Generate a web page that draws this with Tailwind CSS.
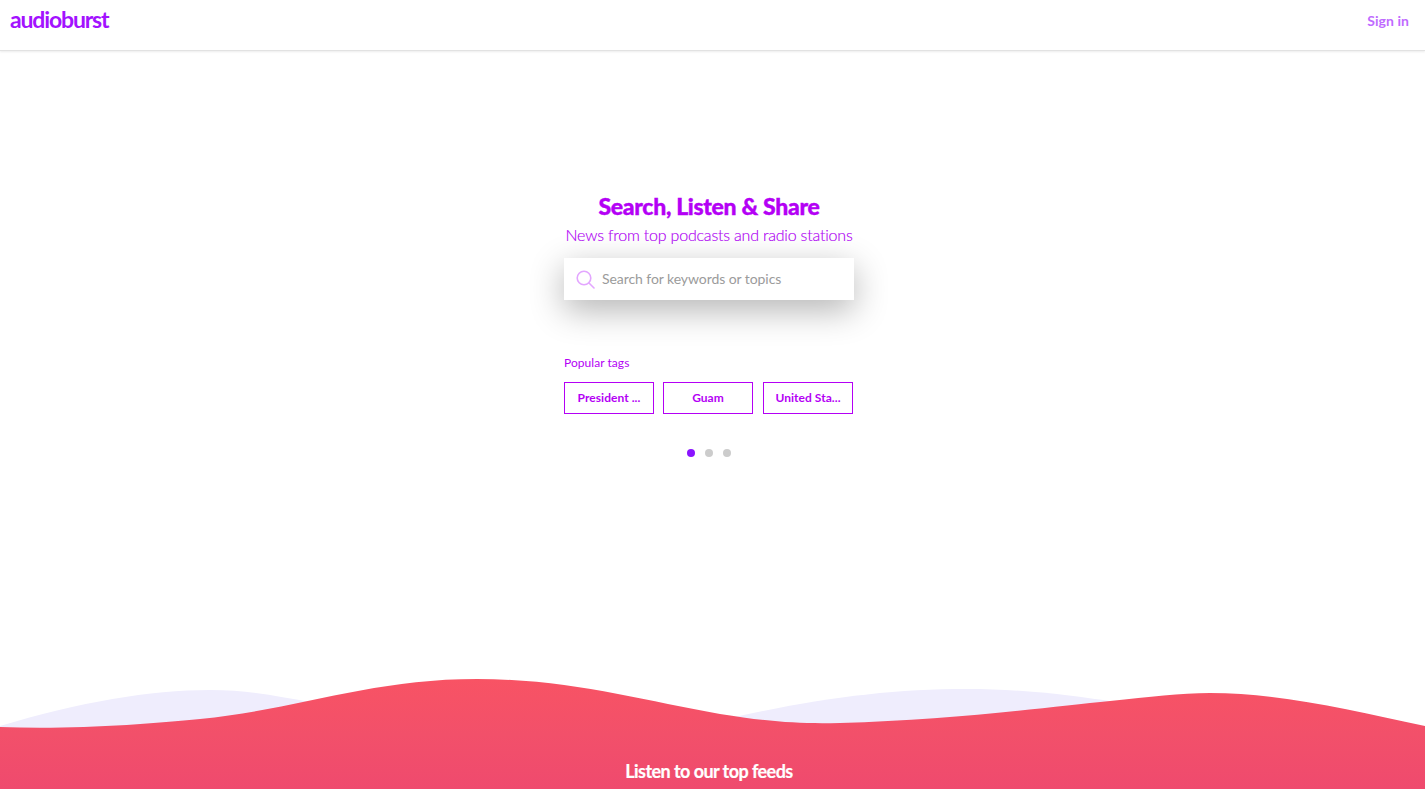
<!DOCTYPE html>
<html lang="en">
<head>
    <meta charset="UTF-8">
    <title>Audioburst</title>
    <script src="https://cdn.jsdelivr.net/npm/@tailwindcss/browser@4"></script>
</head>
<body class="bg-white font-['Lato',sans-serif]">
    <div class="flex flex-col h-[789px] overflow-hidden">
        <header class="h-[51px] shrink-0 flex items-start justify-between pl-[10px] pr-[16px] border-b border-[#e2e2e2] shadow-[0_1px_2px_rgba(0,0,0,0.08)]">
            <a class="mt-[5px] text-[23px] leading-[28px] font-bold text-[#a312ff] tracking-[-1.15px]">audioburst</a>
            <a class="mt-[11px] text-[14px] leading-[20px] font-bold tracking-[0.05px] text-[#bf6bff]">Sign in</a>
        </header>

        <main class="flex-1 flex flex-col items-center pt-[140px] pr-[7px]">
            <h1 class="text-[23px] leading-[30px] font-black tracking-[-0.32px] [-webkit-text-stroke:0.4px_#b400f5] text-[#b400f5]">Search, Listen &amp; Share</h1>
            <p class="mt-[2px] text-[16px] leading-[24px] font-light tracking-[-0.2px] [-webkit-text-stroke:0.15px_#b000f5] text-[#b000f5]">News from top podcasts and radio stations</p>

            <div class="mt-[11px] w-[290px] h-[42px] flex items-center gap-[7px] pl-[12px] bg-white shadow-[0_10px_34px_rgba(0,0,0,0.3)]">
                <svg class="w-[19px] h-[19px]" viewBox="0 0 19 19" fill="none" stroke="#e3a6ff" stroke-width="1.6" stroke-linecap="round">
                    <circle cx="8" cy="8" r="6.8" />
                    <path d="M13 13l5 5" />
                </svg>
                <span class="pb-[2px] text-[14px] tracking-[-0.07px] text-[#9b9b9b]">Search for keywords or topics</span>
            </div>

            <div class="mt-[55px] w-[290px]">
                <div class="text-[12px] leading-[16px] tracking-[0.05px] text-[#b400f5]">Popular tags</div>
                <div class="mt-[11px] flex gap-[9px]">
                    <button class="w-[90px] h-[32px] border border-[#b400f5] text-[12px] font-bold tracking-[0.05px] text-[#b400f5]">President ...</button>
                    <button class="w-[90px] h-[32px] border border-[#b400f5] text-[12px] font-bold tracking-[0.05px] text-[#b400f5]">Guam</button>
                    <button class="ml-[1px] w-[90px] h-[32px] border border-[#b400f5] text-[12px] font-bold tracking-[0.05px] text-[#b400f5]">United Sta...</button>
                </div>
            </div>

            <div class="mt-[35px] flex gap-[10px]">
                <span class="w-[8px] h-[8px] rounded-full bg-[#8a14ff]"></span>
                <span class="w-[8px] h-[8px] rounded-full bg-[#cccccc]"></span>
                <span class="w-[8px] h-[8px] rounded-full bg-[#cccccc]"></span>
            </div>
        </main>

        <footer class="relative h-[119px] shrink-0">
            <svg class="absolute inset-0 w-full h-full" viewBox="0 670 1425 119" preserveAspectRatio="none">
                <defs>
                    <linearGradient id="wave-red" x1="0" y1="0" x2="0" y2="1">
                        <stop offset="0" stop-color="#f85364" />
                        <stop offset="0.5" stop-color="#f2506a" />
                        <stop offset="1" stop-color="#ef4a6e" />
                    </linearGradient>
                </defs>
                <path fill="#efedfd" d="M0 726C80 702 150 690 210 690C250 690 280 697 310 702L310 730L0 730Z" />
                <path fill="#efedfd" d="M730 718C820 698 890 689 967 689C1020 689 1070 695 1115 702L1115 730L730 730Z" />
                <path fill="url(#wave-red)" d="M0 727C70 730 150 724 200 719C300 709 370 679 477 679C570 679 640 700 720 714C770 722 800 724 840 723C950 720 1050 707 1110 701C1150 697 1180 693 1210 693C1280 693 1350 710 1425 726L1425 789L0 789Z" />
            </svg>
            <h2 class="absolute left-0 right-[7px] top-[89px] text-center text-[18px] leading-[24px] font-bold tracking-[-0.56px] [-webkit-text-stroke:0.2px_#ffffff] text-white">Listen to our top feeds</h2>
        </footer>
    </div>
</body>
</html>
